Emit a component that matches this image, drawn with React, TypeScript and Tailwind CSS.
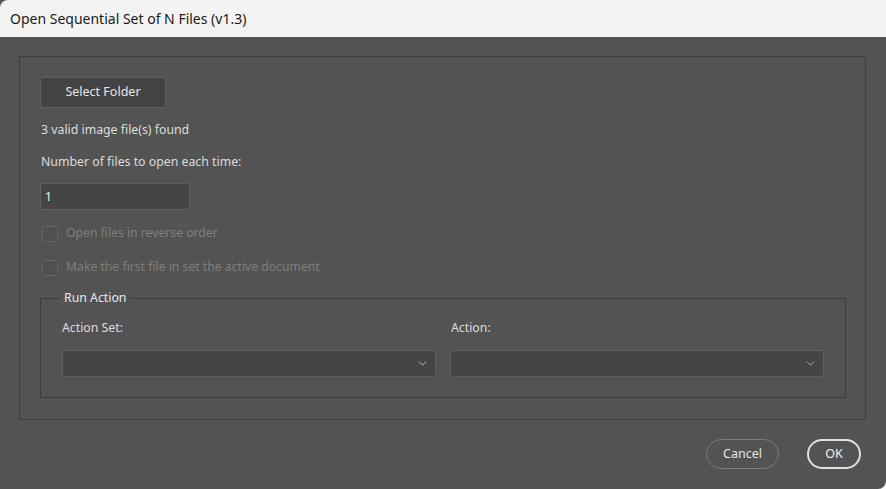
import { ChevronDown } from "lucide-react";

const font = { fontFamily: '"Noto Sans", "Open Sans", sans-serif' };

function Check({ label }: { label: string }) {
  return (
    <label className="flex items-center h-[17px] gap-[8px] text-[12.2px] text-[#7e7e7e]">
      <span className="ml-[2px] size-[16px] rounded-[3px] border border-[#666] bg-[#505050]" />
      {label}
    </label>
  );
}

function Select() {
  return (
    <div className="flex-1 h-[27px] rounded-[3px] border border-[#5e5e5e] bg-[#454545] flex items-center justify-end pr-[6px]">
      <ChevronDown className="size-[13px] text-[#c8c8c8]" strokeWidth={1.5} />
    </div>
  );
}

export default function App() {
  return (
    <div className="w-[886px] h-[489px] bg-[#535353] flex flex-col overflow-hidden rounded-br-[8px]" style={font}>
      {/* title bar */}
      <div className="h-[37px] shrink-0 bg-[#f3f3f3] flex items-center pl-[10px] text-[14px] text-[#1a1a1a] rounded-tl-[8px]">
        Open Sequential Set of N Files (v1.3)
      </div>

      <div className="flex-1 flex flex-col pt-[19px] pl-[19px] pr-[20px]">
        <div className="h-[364px] border border-[#404040] flex flex-col pt-[20px] pl-[20px] pr-[19px]">
          <button className="w-[126px] h-[31px] bg-[#434343] border border-[#5f5f5f] rounded-[2px] text-[12.5px] text-[#e6e6e6]">
            Select Folder
          </button>
          <div className="mt-[14px] h-[16px] leading-[16px] text-[12.3px] text-[#dcdcdc] pl-[1px]">3 valid image file(s) found</div>
          <div className="mt-[16px] h-[16px] leading-[16px] text-[12.3px] text-[#dcdcdc] pl-[1px]">Number of files to open each time:</div>
          <div className="mt-[13px] w-[150px] h-[27px] bg-[#454545] border border-[#5e5e5e] rounded-[2px] flex items-center pl-[4px] text-[12px] text-[#f0f0f0]">
            1
          </div>
          <div className="mt-[15px]">
            <Check label="Open files in reverse order" />
          </div>
          <div className="mt-[17px]">
            <Check label="Make the first file in set the active document" />
          </div>

          <fieldset className="mt-[14px] border border-[#3c3c3c] h-[108px] p-0">
            <legend className="ml-[19px] px-[4px] text-[12.3px] leading-[16px] text-[#e8e8e8]">Run Action</legend>
            <div className="flex gap-[14px] mt-[14px] px-[21px]">
              <div className="flex-1 flex flex-col">
                <div className="h-[16px] leading-[16px] text-[12.3px] text-[#dcdcdc]">Action Set:</div>
                <div className="mt-[14px] flex"><Select /></div>
              </div>
              <div className="flex-1 flex flex-col">
                <div className="h-[16px] leading-[16px] text-[12.3px] text-[#dcdcdc] pl-[1px]">Action:</div>
                <div className="mt-[14px] flex"><Select /></div>
              </div>
            </div>
          </fieldset>
        </div>

        <div className="flex justify-end gap-[28px] mt-[19px] pr-[5px]">
          <button className="w-[73px] h-[30px] rounded-full border border-[#7a7a7a] text-[12.5px] text-[#e6e6e6]">
            Cancel
          </button>
          <button className="w-[54px] h-[30px] rounded-full border-2 border-[#e0e0e0] text-[12.5px] text-[#f2f2f2]">
            OK
          </button>
        </div>
      </div>
    </div>
  );
}
